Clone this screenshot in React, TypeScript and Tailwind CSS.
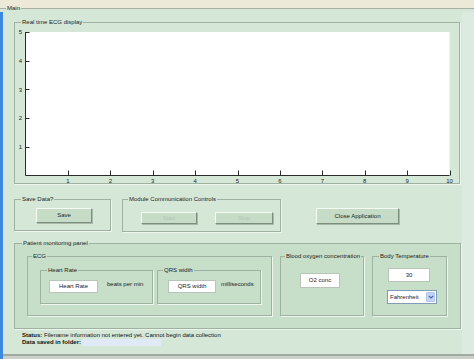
import React from "react";

const legend = "px-[1px] text-[6px] leading-[7px] text-[#1c1c1c] whitespace-nowrap";
const box = "border border-[#9fb1a1] shadow-[1px_1px_0_#eef7ee]";
const btn =
  "flex items-center justify-center bg-[#c6dcc7] border border-t-[#f4faf4] border-l-[#f4faf4] border-b-[#7d8e7e] border-r-[#7d8e7e] shadow-[1px_1px_0_#a9baaa] text-[6px] text-[#1c1c1c]";
const field =
  "flex items-center justify-center bg-white border border-[#b7c5b8] text-[6px] text-[#222]";

function Chart() {
  const x0 = 10.5;
  const x1 = 434.5;
  const yTop = 6;
  const yAxis = 149.5;
  const xs = [1, 2, 3, 4, 5, 6, 7, 8, 9, 10];
  const ys = [1, 2, 3, 4, 5];
  const xp = (v: number) => x0 + v * 42.4;
  const yp = (v: number) => yAxis - v * 28.7;
  return (
    <svg width={444} height={157} overflow="visible" className="block">
      <rect x={x0} y={yTop} width={x1 - x0} height={yAxis - yTop} fill="#ffffff" />
      <path d={`M${x0} ${yTop}V${yAxis}H${x1}`} stroke="#2b2b2b" strokeWidth={1} fill="none" />
      {xs.map((v) => (
        <g key={v}>
          <line x1={Math.round(xp(v)) + 0.5} x2={Math.round(xp(v)) + 0.5} y1={yAxis} y2={yAxis - 5} stroke="#2b2b2b" />
          <text
            x={xp(v)}
            y={157}
            textAnchor="middle"
            fontSize={6}
            fontFamily="'Liberation Sans', Arial, sans-serif"
            fill="#222"
          >
            {v}
          </text>
        </g>
      ))}
      {ys.map((v) => (
        <g key={v}>
          <line x1={x0} x2={x0 + 4} y1={Math.round(yp(v)) + 0.5} y2={Math.round(yp(v)) + 0.5} stroke="#2b2b2b" />
          <text
            x={7}
            y={yp(v) + 2.2}
            textAnchor="end"
            fontSize={6}
            fontFamily="'Liberation Sans', Arial, sans-serif"
            fill="#222"
          >
            {v}
          </text>
        </g>
      ))}
    </svg>
  );
}

export default function App() {
  return (
    <div className="w-[474px] h-[359px] overflow-hidden bg-[#ece9d8] font-['Liberation_Sans',Arial,sans-serif]">
      <fieldset className="mt-[5px] h-[354px] border-t border-[#a8b1a4] bg-[#d5e8d8]">
        <legend className={`ml-[6px] ${legend}`}>Main</legend>
        <div className="flex h-[347px]">
          <div className="w-[3px] bg-[#3b8ae2]" />
          <div className="flex-1 flex flex-col">
            <div className="flex h-[342px]">
              <div className="w-[459px] flex flex-col pl-[11px]">
                {/* ECG display */}
                <fieldset className={`mt-[7px] w-[446px] h-[165px] ${box}`}>
                  <legend className={`ml-[6px] ${legend}`}>Real time ECG display</legend>
                  <Chart />
                </fieldset>

                {/* controls row */}
                <div className="flex items-start mt-[12px]">
                  <fieldset className={`w-[97px] h-[35px] ${box}`}>
                    <legend className={`ml-[6px] ${legend}`}>Save Data?</legend>
                    <div className={`ml-[21px] mt-[5px] w-[56px] h-[15px] ${btn}`}>Save</div>
                  </fieldset>
                  <fieldset className={`ml-[11px] w-[159px] h-[36px] ${box}`}>
                    <legend className={`ml-[5px] ${legend}`}>Module Communication Controls</legend>
                    <div className="flex ml-[18px] mt-[9px] gap-[18px]">
                      <div className={`w-[56px] h-[12px] ${btn} text-[#b3c6b4]`}>Start</div>
                      <div className={`w-[58px] h-[12px] ${btn} text-[#b3c6b4]`}>Stop</div>
                    </div>
                  </fieldset>
                  <div className={`ml-[35px] mt-[12px] w-[83px] h-[16px] ${btn}`}>Close Application</div>
                </div>

                {/* patient monitoring */}
                <fieldset className={`mt-[8px] w-[447px] h-[89px] bg-[#c7dec9] ${box}`}>
                  <legend className={`ml-[7px] ${legend}`}>Patient monitoring panel</legend>
                  <div className="flex items-start">
                    <fieldset className={`ml-[12px] mt-[6px] w-[245px] h-[63px] ${box}`}>
                      <legend className={`ml-[4px] ${legend}`}>ECG</legend>
                      <div className="flex items-start">
                        <fieldset className={`ml-[12px] mt-[7px] w-[113px] h-[37px] ${box}`}>
                          <legend className={`ml-[6px] ${legend}`}>Heart Rate</legend>
                          <div className="flex items-start mt-[6px]">
                            <div className={`ml-[8px] w-[49px] h-[13px] ${field}`}>Heart Rate</div>
                            <span className="ml-[9px] mt-[1px] text-[6px] leading-[7px] text-[#222]">beats per min</span>
                          </div>
                        </fieldset>
                        <fieldset className={`ml-[4px] mt-[7px] w-[104px] h-[37px] ${box}`}>
                          <legend className={`ml-[5px] ${legend}`}>QRS width</legend>
                          <div className="flex items-start mt-[6px]">
                            <div className={`ml-[10px] w-[48px] h-[13px] ${field}`}>QRS width</div>
                            <span className="ml-[5px] mt-[1px] text-[6px] leading-[7px] text-[#222]">milliseconds</span>
                          </div>
                        </fieldset>
                      </div>
                    </fieldset>

                    <fieldset className={`ml-[8px] mt-[6px] w-[84px] h-[63px] ${box}`}>
                      <legend className={`ml-[4px] ${legend}`}>Blood oxygen concentration</legend>
                      <div className={`ml-[19px] mt-[13px] w-[40px] h-[15px] ${field}`}>O2 conc</div>
                    </fieldset>

                    <fieldset className={`ml-[8px] mt-[6px] w-[75px] h-[63px] ${box}`}>
                      <legend className={`ml-[6px] ${legend}`}>Body Temperature</legend>
                      <div className={`ml-[15px] mt-[8px] w-[42px] h-[14px] ${field}`}>30</div>
                      <div className="ml-[14px] mt-[8px] w-[50px] h-[14px] flex items-center bg-white border border-[#7f9db9]">
                        <span className="flex-1 pl-[2px] text-[6px] text-[#222]">Fahrenheit</span>
                        <span className="mr-[1px] w-[9px] h-[10px] flex items-center justify-center rounded-[1px] bg-[#c3d3f7] border border-[#b3c6ef]">
                          <svg width="6" height="4" viewBox="0 0 6 4">
                            <path d="M0.8 0.8L3 3L5.2 0.8" stroke="#4d64a3" strokeWidth="1.2" fill="none" />
                          </svg>
                        </span>
                      </div>
                    </fieldset>
                  </div>
                </fieldset>

                {/* status */}
                <div className="ml-[8px] mt-[3px] flex flex-col text-[6px] leading-[7px] text-[#111]">
                  <div className="whitespace-nowrap">
                    <span className="font-bold">Status:</span> Filename information not entered yet. Cannot begin data collection
                  </div>
                  <div className="flex items-center whitespace-nowrap">
                    <span className="font-bold">Data saved in folder:</span>
                    <span className="ml-[1px] w-[79px] h-[7px] bg-[#e0eaf6]" />
                  </div>
                </div>
              </div>
              <div className="flex-1 bg-[#dbebdf]" />
            </div>
            <div className="h-[2px] bg-[#a2aaa0]" />
            <div className="h-[3px] bg-[#c9d1c8]" />
          </div>
        </div>
      </fieldset>
    </div>
  );
}
